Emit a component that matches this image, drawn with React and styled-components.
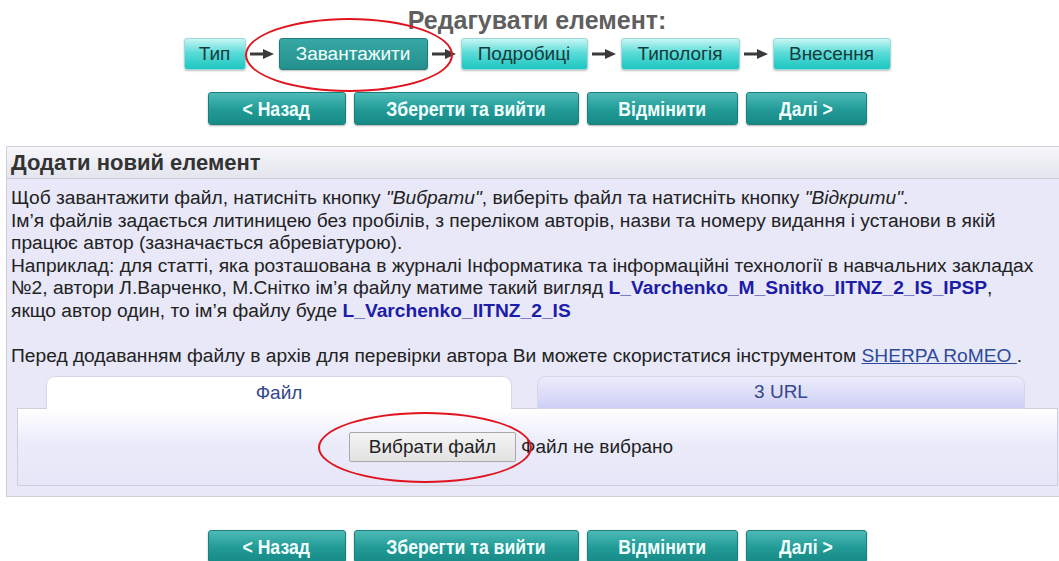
import styled, { createGlobalStyle } from "styled-components";

const GlobalStyle = createGlobalStyle`
  html, body {
    margin: 0;
    padding: 0;
    background: #fff;
    overflow: hidden;
  }
  body {
    font-family: "Liberation Sans", Arial, sans-serif;
    color: #222;
  }
`;

const steps = [
  { label: "Тип", width: 62 },
  { label: "Завантажити", width: 149, active: true },
  { label: "Подробиці", width: 127 },
  { label: "Типологія", width: 119 },
  { label: "Внесення", width: 118 },
];

const actions = [
  { label: "< Назад", width: 138 },
  { label: "Зберегти та вийти", width: 225 },
  { label: "Відмінити", width: 151 },
  { label: "Далі >", width: 121 },
];

const Arrow = () => (
  <ArrowBox>
    <svg width="26" height="12" viewBox="0 0 26 12">
      <line x1="1" y1="6" x2="16" y2="6" stroke="#3a3a3a" strokeWidth="3" />
      <polygon points="14,1 25,6 14,11" fill="#3a3a3a" />
    </svg>
  </ArrowBox>
);

const ActionBar = ({ top }) => (
  <Actions $top={top}>
    {actions.map((a) => (
      <ActionButton key={a.label} $w={a.width}>
        <Narrow>{a.label}</Narrow>
      </ActionButton>
    ))}
  </Actions>
);

const App = () => {
  return (
    <>
      <GlobalStyle />
      <Page>
        <Title>Редагувати елемент:</Title>

        <Steps>
          {steps.map((s, i) => (
            <StepGroup key={s.label}>
              {i > 0 && <Arrow />}
              <Step $w={s.width} $active={s.active}>
                {s.label}
              </Step>
            </StepGroup>
          ))}
        </Steps>

        <ActionBar top={22} />

        <Panel>
          <PanelHeader>Додати новий елемент</PanelHeader>
          <PanelBody>
            <p>
              Щоб завантажити файл, натисніть кнопку <em>"Вибрати"</em>,
              виберіть файл та натисніть кнопку <em>"Відкрити"</em>.
              <br />
              Ім’я файлів задається литиницею без пробілів, з переліком
              авторів, назви та номеру видання і установи в якій
              <br />
              працює автор (зазначається абревіатурою).
              <br />
              Наприклад: для статті, яка розташована в журналі Інформатика та
              інформаційні технології в навчальних закладах
              <br />
              №2, автори Л.Варченко, М.Снітко ім’я файлу матиме такий вигляд{" "}
              <FileName>L_Varchenko_M_Snitko_IITNZ_2_IS_IPSP</FileName>,
              <br />
              якщо автор один, то ім’я файлу буде{" "}
              <FileName>L_Varchenko_IITNZ_2_IS</FileName>
            </p>
            <p>
              Перед додаванням файлу в архів для перевірки автора Ви можете
              скористатися інструментом <Link href="#">SHERPA RoMEO </Link>.
            </p>

            <Tabs>
              <TabList>
                <Tab $w={466} $active>
                  Файл
                </Tab>
                <Tab $w={488}>3 URL</Tab>
              </TabList>
              <TabPanel>
                <PickButton>Вибрати файл</PickButton>
                <PickStatus>Файл не вибрано</PickStatus>
              </TabPanel>
            </Tabs>
          </PanelBody>
        </Panel>

        <ActionBar top={33} />

        <Mark $x={245} $y={18} $w={208} $h={74} />
        <Mark $x={318} $y={412} $w={214} $h={71} />
      </Page>
    </>
  );
};

const Page = styled.div`
  position: relative;
  width: 1062px;
  margin-left: 6px;
  padding-top: 7px;
`;

const Title = styled.h1`
  margin: 0;
  text-align: center;
  font-size: 25px;
  line-height: 27px;
  font-weight: bold;
  color: #5f5f5f;
`;

const Steps = styled.div`
  display: flex;
  justify-content: center;
  margin-top: 4px;
  height: 32px;
`;

const StepGroup = styled.div`
  display: flex;
  align-items: center;
`;

const ArrowBox = styled.span`
  display: flex;
  justify-content: center;
  width: 33px;
`;

const Step = styled.div`
  box-sizing: border-box;
  width: ${(p) => p.$w}px;
  height: 32px;
  display: flex;
  align-items: center;
  justify-content: center;
  font-size: 19px;
  border-radius: 3px;
  color: ${(p) => (p.$active ? "#f4ffff" : "#173a3a")};
  background: ${(p) =>
    p.$active
      ? "linear-gradient(#37a8a5, #23908d)"
      : "linear-gradient(#c6f6f4 0%, #5cdcd8 45%, #1cc6c2 100%)"};
  border: 1px solid ${(p) => (p.$active ? "#1f7e7b" : "#9fd8d6")};
  box-shadow: 0 1px 2px rgba(0, 0, 0, 0.25);
`;

const Actions = styled.div`
  display: flex;
  justify-content: center;
  gap: 8px;
  margin-top: ${(p) => p.$top}px;
`;

const ActionButton = styled.div`
  box-sizing: border-box;
  width: ${(p) => p.$w}px;
  height: 33px;
  display: flex;
  align-items: center;
  justify-content: center;
  font-size: 21px;
  font-weight: bold;
  color: #f2ffff;
  background: linear-gradient(#4dbab7, #219a96 55%, #178a86);
  border: 1px solid #1a7f7c;
  border-radius: 3px;
  box-shadow: 0 1px 2px rgba(0, 0, 0, 0.3);
`;

/* no narrow face installed, so squeeze the regular one */
const Narrow = styled.span`
  display: inline-block;
  white-space: nowrap;
  transform: scaleX(0.84);
`;

const Panel = styled.section`
  margin-top: 21px;
  border: 1px solid #cfcfd6;
  background: #e8e8f8;
`;

const PanelHeader = styled.h2`
  margin: 0;
  height: 31px;
  padding-left: 4px;
  display: flex;
  align-items: center;
  font-size: 22px;
  font-weight: bold;
  color: #333;
  background: linear-gradient(#f6f6fb, #e4e4ee);
  border-bottom: 1px solid #cdcdd8;
`;

const PanelBody = styled.div`
  padding: 8px 10px 10px 4px;
  font-size: 19.2px;
  line-height: 22.6px;
  color: #222;
  white-space: nowrap;

  p {
    margin: 0 0 22px;
  }
  p + p {
    margin-bottom: 0;
  }
`;

const FileName = styled.strong`
  color: #1c1ca8;
`;

const Link = styled.a`
  color: #2c4a9a;
  text-decoration: underline;
`;

const Tabs = styled.div`
  margin-top: 9px;
  margin-left: 6px;
  margin-right: -30px;
  white-space: normal;
`;

const TabList = styled.div`
  display: flex;
  gap: 25px;
  padding-left: 29px;
`;

const Tab = styled.div`
  box-sizing: border-box;
  width: ${(p) => p.$w}px;
  height: 33px;
  margin-bottom: -1px;
  display: flex;
  align-items: center;
  justify-content: center;
  font-size: 19px;
  color: #34488a;
  border: 1px solid #d6d6e6;
  border-bottom: ${(p) => (p.$active ? "none" : "1px solid #d6d6e6")};
  border-radius: 9px 9px 0 0;
  background: ${(p) =>
    p.$active ? "#ffffff" : "linear-gradient(#ececfc, #cfcff6)"};
  position: relative;
  z-index: ${(p) => (p.$active ? 1 : 0)};
`;

const TabPanel = styled.div`
  box-sizing: border-box;
  width: 1041px;
  height: 78px;
  display: flex;
  align-items: center;
  padding-left: 331px;
  border: 1px solid #cfcfdc;
  background: linear-gradient(#ffffff 0%, #ebebfa 45%, #e6e6f8 100%);
`;

const PickButton = styled.button`
  height: 30px;
  width: 167px;
  padding: 0;
  font-family: "Liberation Sans", Arial, sans-serif;
  font-size: 19px;
  color: #222;
  background: linear-gradient(#f4f4f4, #e2e2e2);
  border: 1px solid #a9a9a9;
  border-radius: 2px;
`;

const PickStatus = styled.span`
  margin-left: 5px;
  font-size: 19px;
  color: #222;
`;

const Mark = styled.div`
  position: absolute;
  left: ${(p) => p.$x - 6}px;
  top: ${(p) => p.$y}px;
  width: ${(p) => p.$w}px;
  height: ${(p) => p.$h}px;
  box-sizing: border-box;
  border: 2px solid #e0141e;
  border-radius: 50%;
  pointer-events: none;
`;

export default App;
